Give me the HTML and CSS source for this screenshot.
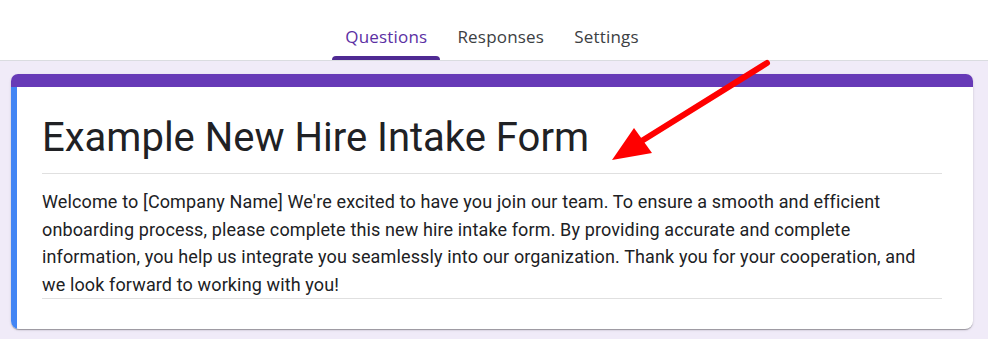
FILE: index.html
```html
<!DOCTYPE html>
<html lang="en">
<head>
<meta charset="utf-8">
<title>Example New Hire Intake Form</title>
<link rel="stylesheet" href="styles.css">
</head>
<body>
<header class="topbar">
  <nav class="tabs">
    <a class="tab tab-active">Questions</a>
    <a class="tab">Responses</a>
    <a class="tab">Settings</a>
  </nav>
</header>
<main class="page">
  <section class="card">
    <div class="card-accent"></div>
    <div class="card-body">
      <h1 class="form-title">Example New Hire Intake Form</h1>
      <p class="form-desc">Welcome to [Company Name] We're excited to have you join our team. To ensure a smooth and efficient onboarding process, please complete this new hire intake form. By providing accurate and complete information, you help us integrate you seamlessly into our organization. Thank you for your cooperation, and we look forward to working with you!</p>
    </div>
  </section>
</main>
<svg class="arrow" width="988" height="339" viewBox="0 0 988 339" xmlns="http://www.w3.org/2000/svg">
  <line x1="767" y1="63" x2="640" y2="142" stroke="#ff0000" stroke-width="6" stroke-linecap="round"/>
  <polygon points="612,160 634,128 652,153" fill="#ff0000"/>
</svg>
</body>
</html>
```
FILE: styles.css
```css
html, body {
  margin: 0;
  padding: 0;
}
body {
  background: #f0ebf8;
  font-family: Roboto, "Liberation Sans", Arial, sans-serif;
  color: #202124;
  width: 988px;
  height: 339px;
  overflow: hidden;
  position: relative;
}
.topbar {
  height: 60px;
  background: #ffffff;
  border-bottom: 1px solid #dadce0;
  display: flex;
  justify-content: center;
}
.tabs {
  display: flex;
  align-items: stretch;
  gap: 4px;
  margin-left: -4px;
}
.tab {
  font-family: "Open Sans", Roboto, sans-serif;
  font-size: 17px;
  font-weight: 500;
  color: #3c4043;
  padding: 13px 13px 0;
  display: flex;
  align-items: center;
  position: relative;
  letter-spacing: 0.2px;
}
.tab-active {
  color: #5b2fa3;
}
.tab-active::after {
  content: "";
  position: absolute;
  left: 0;
  right: 0;
  bottom: 0;
  height: 4px;
  background: #4f2a93;
  border-radius: 4px 4px 0 0;
}
.page {
  padding: 13px 15px 0 11px;
}
.card {
  width: 962px;
  background: #ffffff;
  border-radius: 7px 7px 8px 8px;
  box-shadow: 0 2px 1px -1px rgba(0,0,0,0.2), 0 1px 1px 0 rgba(0,0,0,0.14), 0 1px 3px 0 rgba(0,0,0,0.12);
  overflow: hidden;
}
.card-accent {
  height: 13px;
  background: #673ab7;
}
.card-body {
  border-left: 6px solid #4285f4;
  padding: 27px 31px 30px 25px;
}
.form-title {
  margin: 0;
  font-size: 40px;
  font-weight: 400;
  line-height: 48px;
  padding-bottom: 11px;
  border-bottom: 1px solid #e0e0e0;
  color: #202124;
}
.form-desc {
  margin: 0;
  padding-top: 14px;
  font-size: 18px;
  letter-spacing: 0.13px;
  line-height: 27.5px;
  border-bottom: 1px solid #e0e0e0;
  color: #202124;
}
.arrow {
  position: absolute;
  left: 0;
  top: 0;
  pointer-events: none;
}
```
